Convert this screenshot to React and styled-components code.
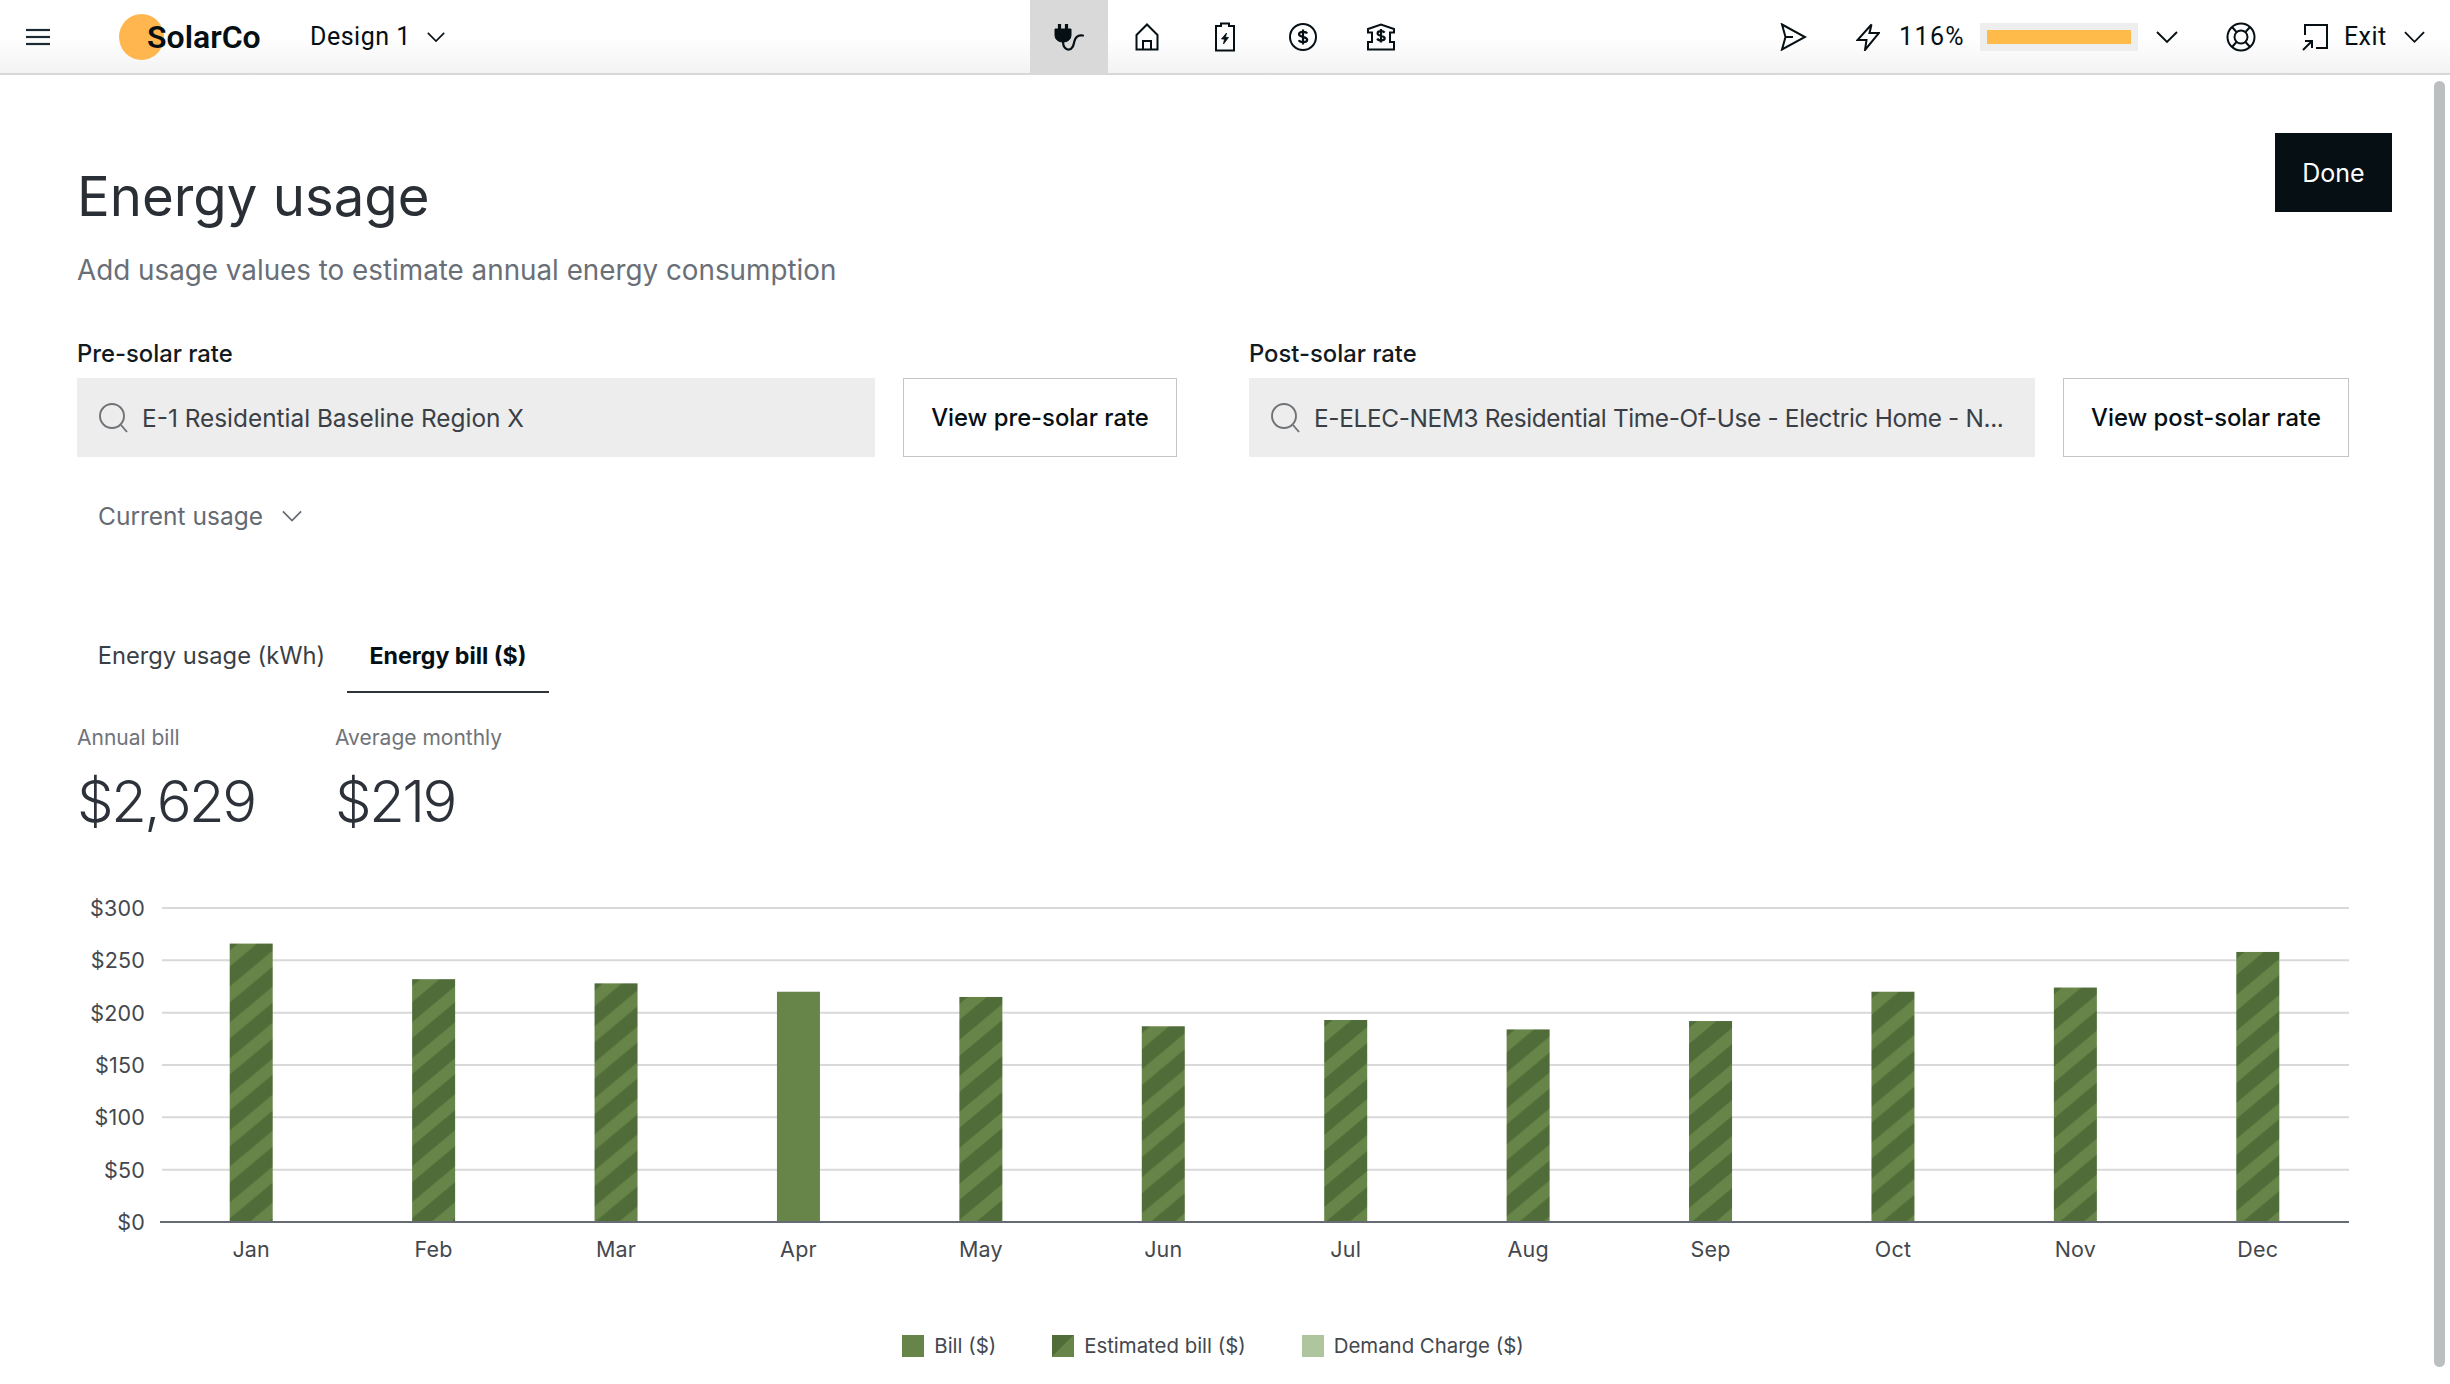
import React from "react";
import styled, { createGlobalStyle } from "styled-components";

const Global = createGlobalStyle`
  html, body { margin: 0; padding: 0; background: #fff; }
  body { font-family: "Inter", "Open Sans", sans-serif; color: #050f14; }
  * { box-sizing: border-box; }
`;

const Page = styled.div`
  position: relative;
  width: 2450px;
  height: 1384px;
  overflow: hidden;
  background: #fff;
`;

const Header = styled.header`
  display: flex;
  align-items: center;
  height: 75px;
  padding-left: 26px;
  border-bottom: 2px solid #d8d8d8;
  background: linear-gradient(180deg, #ffffff 0%, #ffffff 50%, #f3f3f3 100%);
  font-family: "Roboto", sans-serif;
`;

const Menu = styled.div`
  display: flex;
  width: 93px;
`;

const Logo = styled.div`
  position: relative;
  display: flex;
  align-items: center;
  width: 191px;
  height: 46px;
  padding-left: 28px;
  font-size: 32px;
  font-weight: 600;
  &::before {
    content: "";
    position: absolute;
    left: 0;
    top: 0;
    width: 45px;
    height: 46px;
    border-radius: 50%;
    background: #ffb64f;
  }
  span { position: relative; }
`;

const Design = styled.div`
  display: flex;
  align-items: center;
  gap: 16px;
  width: 720px;
  font-size: 25px;
  letter-spacing: 0.5px;
`;

const NavItem = styled.div`
  display: flex;
  align-items: center;
  justify-content: center;
  width: 78px;
  height: 73px;
  background: ${(p) => (p.$active ? "#d9d9d9" : "transparent")};
`;

const RightTools = styled.div`
  display: flex;
  align-items: center;
  margin-left: 360px;
`;

const Spacer = styled.span`
  flex: none;
  width: ${(p) => p.$w}px;
`;

const Percent = styled.span`
  width: 81px;
  margin-left: 19px;
  font-size: 25px;
  letter-spacing: 1.4px;
`;

const Meter = styled.div`
  display: flex;
  align-items: center;
  width: 158px;
  height: 28px;
  padding: 0 7px;
  background: #eeeeee;
`;

const MeterFill = styled.div`
  width: 100%;
  height: 14px;
  background: #ffbb4a;
`;

const ExitLabel = styled.span`
  margin: 0 18px 0 15px;
  font-size: 25px;
  letter-spacing: 0.4px;
`;

const Scrollbar = styled.div`
  position: absolute;
  left: 2434px;
  top: 81px;
  width: 11px;
  height: 1286px;
  border-radius: 6px;
  background: #bcbfc0;
`;

const Main = styled.main`
  padding: 58px 101px 0 77px;
`;

const TitleRow = styled.div`
  display: flex;
  justify-content: space-between;
  align-items: flex-start;
  height: 157px;
`;

const TitleBlock = styled.div`
  padding-top: 28px;
`;

const Title = styled.h1`
  margin: 0;
  font-size: 54.5px;
  line-height: 70px;
  font-weight: 400;
  color: #2a2f36;
`;

const Subtitle = styled.p`
  margin: 19px 0 0;
  font-size: 27.8px;
  line-height: 40px;
  color: #6a6f77;
`;

const DoneButton = styled.button`
  width: 117px;
  height: 79px;
  margin-right: -43px;
  border: 0;
  background: #050f14;
  color: #fff;
  font-family: "Inter", sans-serif;
  font-size: 25px;
`;

const Rates = styled.div`
  display: flex;
  margin-top: 48px;
`;

const RateGroup = styled.div`
  display: flex;
  flex-direction: column;
  gap: 10px;
  width: ${(p) => p.$width}px;
  margin-left: ${(p) => p.$offset || 0}px;
`;

const RateLabel = styled.div`
  height: 30px;
  font-size: 23.8px;
  line-height: 31px;
  font-weight: 500;
  color: #111a20;
`;

const RateControls = styled.div`
  display: flex;
  gap: 28px;
`;

const SearchBox = styled.div`
  display: flex;
  flex: 1;
  align-items: center;
  gap: 14px;
  min-width: 0;
  height: 79px;
  padding-left: 21px;
  background: #ededed;
  font-size: 24.4px;
  color: #3a3f46;
`;

const SearchText = styled.span`
  white-space: nowrap;
  letter-spacing: ${(p) => p.$spacing || 0}px;
`;

const OutlineButton = styled.button`
  width: ${(p) => p.$width}px;
  height: 79px;
  flex: none;
  padding: 0;
  border: 1.5px solid #c4c4c4;
  background: #fff;
  color: #050f14;
  font-family: "Inter", sans-serif;
  font-size: 23.8px;
  font-weight: 500;
`;

const UsageToggle = styled.div`
  display: flex;
  align-items: center;
  gap: 19px;
  height: 36px;
  margin-top: 41px;
  padding-left: 21px;
  font-size: 24.5px;
  color: #666b73;
`;

const Tabs = styled.div`
  display: flex;
  height: 73px;
  margin: 86px 0 0 -1px;
`;

const Tab = styled.div`
  display: flex;
  align-items: center;
  justify-content: center;
  width: ${(p) => p.$width}px;
  height: 73px;
  border-bottom: 2px solid ${(p) => (p.$active ? "#2f343a" : "transparent")};
  font-size: ${(p) => (p.$active ? 23.2 : 23.7)}px;
  font-weight: ${(p) => (p.$active ? 700 : 400)};
  color: ${(p) => (p.$active ? "#050f14" : "#3a3f46")};
`;

const Stats = styled.div`
  display: grid;
  grid-template-columns: 258px auto;
  justify-content: start;
  margin-top: 31px;
`;

const StatLabel = styled.div`
  font-size: 21px;
  line-height: 28px;
  color: #6f737a;
`;

const StatValue = styled.div`
  margin-top: 14px;
  font-size: 58px;
  line-height: 70px;
  font-weight: 300;
  letter-spacing: -2.5px;
  color: #2d323a;
`;

const ChartSvg = styled.svg`
  display: block;
  width: 2272px;
  height: 380px;
  margin-top: 54px;
  font-family: "Inter", sans-serif;
  font-size: 21.5px;
  letter-spacing: 0.2px;
  fill: #44484e;
`;

const Legend = styled.div`
  display: flex;
  justify-content: center;
  align-items: center;
  gap: 56px;
  margin-top: 63px;
`;

const LegendItem = styled.div`
  display: flex;
  align-items: center;
  gap: 10px;
  font-size: 20.4px;
  color: #44484e;
`;

const Swatch = styled.span`
  width: 22px;
  height: 22px;
  background: ${(p) => p.$bg};
`;

const I = ({ w = 28, h = 28, sw = 2, children }) => (
  <svg width={w} height={h} viewBox={`0 0 ${w} ${h}`} fill="none" stroke="#050f14" strokeWidth={sw} strokeLinejoin="miter">
    {children}
  </svg>
);

const Chevron = ({ w = 22, color = "#050f14" }) => (
  <svg width={w} height="14" viewBox="0 0 22 14" fill="none" stroke={color} strokeWidth="1.9">
    <polyline points="1,2 11,12 21,2" />
  </svg>
);

const SearchIcon = () => (
  <svg width="30" height="32" viewBox="0 0 30 32" fill="none" stroke="#6f7277" strokeWidth="1.9">
    <circle cx="14" cy="14" r="12" />
    <line x1="23" y1="23" x2="29" y2="30" />
  </svg>
);

const months = [
  ["Jan", 266], ["Feb", 232], ["Mar", 228], ["Apr", 220, true], ["May", 215], ["Jun", 187],
  ["Jul", 193], ["Aug", 184], ["Sep", 192], ["Oct", 220], ["Nov", 224], ["Dec", 258],
];
const ticks = [300, 250, 200, 150, 100, 50];
const ZERO = 1222;
const UNIT = 314 / 300;
const SLOT = 2189 / 12;

const Chart = () => (
  <ChartSvg viewBox="77 890 2272 380">
    <defs>
      {months.map(([m, v], i) => {
        const x = 160 + SLOT * (i + 0.5) - 21.5;
        const y = ZERO - v * UNIT;
        return (
          <pattern key={m} id={`stripe-${i}`} patternUnits="userSpaceOnUse" width="43" height="36" x={x} y={y + 7}>
            <rect width="43" height="36" fill="#678548" />
            <polygon points="0,16 19,0 43,0 0,36" fill="#506c38" />
            <polygon points="43,16 43,36 19,36" fill="#506c38" />
          </pattern>
        );
      })}
    </defs>
    {ticks.map((t) => {
      const y = ZERO - t * UNIT;
      return (
        <g key={t}>
          <line x1="162" x2="2349" y1={y} y2={y} stroke="#d9d9d9" strokeWidth="2" />
          <text x="145" y={y + 8} textAnchor="end">${t}</text>
        </g>
      );
    })}
    <text x="145" y={ZERO + 8} textAnchor="end">$0</text>
    {months.map(([m, v, solid], i) => {
      const cx = 160 + SLOT * (i + 0.5);
      const h = v * UNIT;
      return (
        <g key={m}>
          <rect x={cx - 21.5} y={ZERO - h} width="43" height={h} fill={solid ? "#678548" : `url(#stripe-${i})`} />
          <text x={cx} y="1257" textAnchor="middle">{m}</text>
        </g>
      );
    })}
    <line x1="160" x2="2349" y1={ZERO} y2={ZERO} stroke="#666b73" strokeWidth="2" />
  </ChartSvg>
);

export default function App() {
  return (
    <Page>
      <Global />
      <Header>
        <Menu>
          <svg width="24" height="18" viewBox="0 0 24 18" stroke="#1c2a33" strokeWidth="2.2">
            <line x1="0" x2="24" y1="2" y2="2" /><line x1="0" x2="24" y1="9" y2="9" /><line x1="0" x2="24" y1="16" y2="16" />
          </svg>
        </Menu>
        <Logo><span>SolarCo</span></Logo>
        <Design>Design 1 <Chevron w={18} /></Design>
        <NavItem $active>
          <I w={30} h={28}>
            <path d="M1 6 H17 V12 C17 17 13 19 9 19 C5 19 1 17 1 12 Z" fill="#050f14" strokeWidth="1" />
            <path d="M5.5 6 V1 M12.5 6 V1" strokeWidth="3.2" />
            <path d="M9 19 C9 24 12 27 15 26.5 C19 26 19.5 22 20.5 18 C21.5 14 24 11.5 29 12.5" strokeWidth="2.2" strokeLinecap="round" />
          </I>
        </NavItem>
        <NavItem>
          <I w={24} h={28}>
            <path d="M1.5 12 L12 1.5 L22.5 12 V26.5 H1.5 Z" />
            <path d="M8 26.5 V18 H16 V26.5" />
          </I>
        </NavItem>
        <NavItem>
          <I w={22} h={30}>
            <path d="M2 4 H7 V1.5 H15 V4 H20 V28.5 H2 Z" />
            <path d="M12.5 11 L7.5 17 H10.5 L9.5 22 L14.5 15.5 H11.5 Z" fill="#050f14" strokeWidth="0.8" />
          </I>
        </NavItem>
        <NavItem>
          <I w={30} h={30}>
            <circle cx="15" cy="15" r="13" />
            <path d="M19 11.5 C18.5 10.2 17 9.8 15 9.8 C12.6 9.8 11 10.7 11 12.2 C11 15.5 19.2 14.3 19.2 17.8 C19.2 19.4 17.5 20.2 15 20.2 C13 20.2 11.4 19.6 10.9 18.2 M15 7.5 V22.5" strokeWidth="2.2" />
          </I>
        </NavItem>
        <NavItem>
          <I w={30} h={28}>
            <path d="M2 6 L15 1.5 L28 6 V9.5 H24 V19 H28 V26.5 H2 V19 H6 V9.5 H2 Z" />
            <path d="M18.6 9.6 C18 8.6 17 8.2 15 8.2 C13 8.2 11.6 9 11.6 10.4 C11.6 13.4 18.7 12.2 18.7 15.2 C18.7 16.6 17.2 17.4 15 17.4 C13 17.4 11.8 16.8 11.3 15.5 M15 6 V19.5" strokeWidth="2.2" />
          </I>
        </NavItem>
        <RightTools>
          <I w={27} h={28}>
            <path d="M2 1.5 L25 14 L2 26.5 L5.5 14 Z M5.5 14 H13" />
          </I>
          <Spacer $w={49} />
          <I w={24} h={28}>
            <path d="M15.5 1.5 L1.5 17 H10.5 L9 27 L23 10 H13.5 Z" />
          </I>
          <Percent>116%</Percent>
          <Meter><MeterFill /></Meter>
          <Spacer $w={18} />
          <Chevron w={22} />
          <Spacer $w={48} />
          <I w={30} h={30}>
            <circle cx="15" cy="15" r="13.5" />
            <circle cx="15" cy="15" r="6.5" />
            <path d="M6 5 L10.5 10 M24 5 L19.5 10 M6 25 L10.5 20 M24 25 L19.5 20" />
          </I>
          <Spacer $w={45} />
          <I w={28} h={28}>
            <path d="M4 12 V2 H26 V25 H15" />
            <path d="M2 27 L11 18 M4 18 H11 V25" />
          </I>
          <ExitLabel>Exit</ExitLabel>
          <Chevron w={21} />
        </RightTools>
      </Header>
      <Scrollbar />
      <Main>
        <TitleRow>
          <TitleBlock>
            <Title>Energy usage</Title>
            <Subtitle>Add usage values to estimate annual energy consumption</Subtitle>
          </TitleBlock>
          <DoneButton>Done</DoneButton>
        </TitleRow>
        <Rates>
          <RateGroup $width={1100}>
            <RateLabel>Pre-solar rate</RateLabel>
            <RateControls>
              <SearchBox><SearchIcon /><SearchText>E-1 Residential Baseline Region X</SearchText></SearchBox>
              <OutlineButton $width={274}>View pre-solar rate</OutlineButton>
            </RateControls>
          </RateGroup>
          <RateGroup $width={1100} $offset={72}>
            <RateLabel>Post-solar rate</RateLabel>
            <RateControls>
              <SearchBox><SearchIcon /><SearchText $spacing={-0.35}>E-ELEC-NEM3 Residential Time-Of-Use - Electric Home - N...</SearchText></SearchBox>
              <OutlineButton $width={286}>View post-solar rate</OutlineButton>
            </RateControls>
          </RateGroup>
        </Rates>
        <UsageToggle>Current usage <Chevron w={20} color="#666b73" /></UsageToggle>
        <Tabs>
          <Tab $width={271}>Energy usage (kWh)</Tab>
          <Tab $width={202} $active>Energy bill ($)</Tab>
        </Tabs>
        <Stats>
          <div><StatLabel>Annual bill</StatLabel><StatValue>$2,629</StatValue></div>
          <div><StatLabel>Average monthly</StatLabel><StatValue>$219</StatValue></div>
        </Stats>
        <Chart />
        <Legend>
          <LegendItem><Swatch $bg="#678548" />Bill ($)</LegendItem>
          <LegendItem><Swatch $bg="linear-gradient(135deg, #506c38 50%, #678548 50%)" />Estimated bill ($)</LegendItem>
          <LegendItem><Swatch $bg="#aec59e" />Demand Charge ($)</LegendItem>
        </Legend>
      </Main>
    </Page>
  );
}
